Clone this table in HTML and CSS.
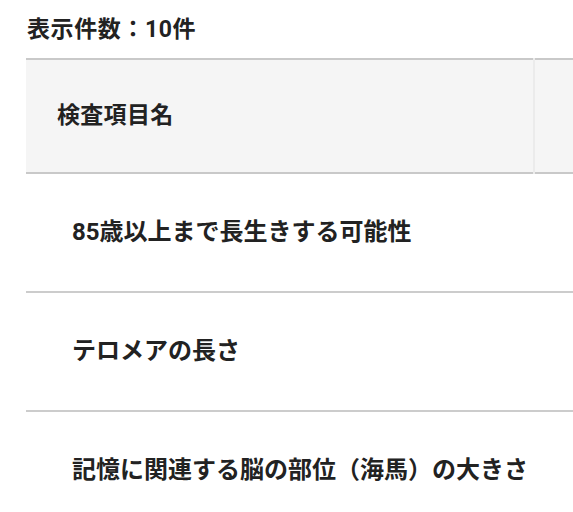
FILE: index.html
```html
<!DOCTYPE html>
<html lang="ja">
<head>
<meta charset="utf-8">
<link rel="stylesheet" href="styles.css">
</head>
<body>
<div class="page">
  <div class="count">表示件数：10件</div>
  <table class="results">
    <thead>
      <tr>
        <th class="col-name">検査項目名</th>
        <th class="col-extra"></th>
      </tr>
    </thead>
    <tbody>
      <tr>
        <td class="cell-name">85歳以上まで長生きする可能性</td>
        <td class="cell-extra"></td>
      </tr>
      <tr>
        <td class="cell-name">テロメアの長さ</td>
        <td class="cell-extra"></td>
      </tr>
      <tr>
        <td class="cell-name">記憶に関連する脳の部位（海馬）の大きさ</td>
        <td class="cell-extra"></td>
      </tr>
    </tbody>
  </table>
</div>
</body>
</html>
```

FILE: styles.css
```css
html, body {
  margin: 0;
  padding: 0;
  overflow: hidden;
  background: #fff;
}

body {
  font-family: "Roboto", "Noto Sans CJK JP", sans-serif;
  font-weight: 700;
  color: #222;
}

.page {
  padding-left: 26px;
}

.count {
  margin: 15px 0 13px 1px;
  height: 30px;
  line-height: 30px;
  font-size: 23px;
  letter-spacing: 0.6px;
}

.results {
  border-collapse: collapse;
  width: 100%;
  table-layout: fixed;
}

.results thead tr {
  background: #f5f5f5;
  border-top: 2px solid #c9c9c9;
  border-bottom: 2px solid #c9c9c9;
}

.results th {
  height: 114px;
  padding: 0 0 0 0;
  line-height: 24px;
  box-sizing: border-box;
  text-align: left;
  font-size: 23px;
  letter-spacing: 0.3px;
  font-weight: 700;
}

.col-name {
  width: 508px;
  padding-left: 31px !important;
}

.col-extra {
  border-left: 2px solid #ebebeb;
}

.results tbody tr {
  border-bottom: 2px solid #cccccc;
}

.results td {
  height: 119px;
  padding: 0 0 1px 0;
  line-height: 24px;
  box-sizing: border-box;
  font-size: 24px;
  vertical-align: middle;
}

.cell-name {
  padding-left: 46px !important;
}
```
